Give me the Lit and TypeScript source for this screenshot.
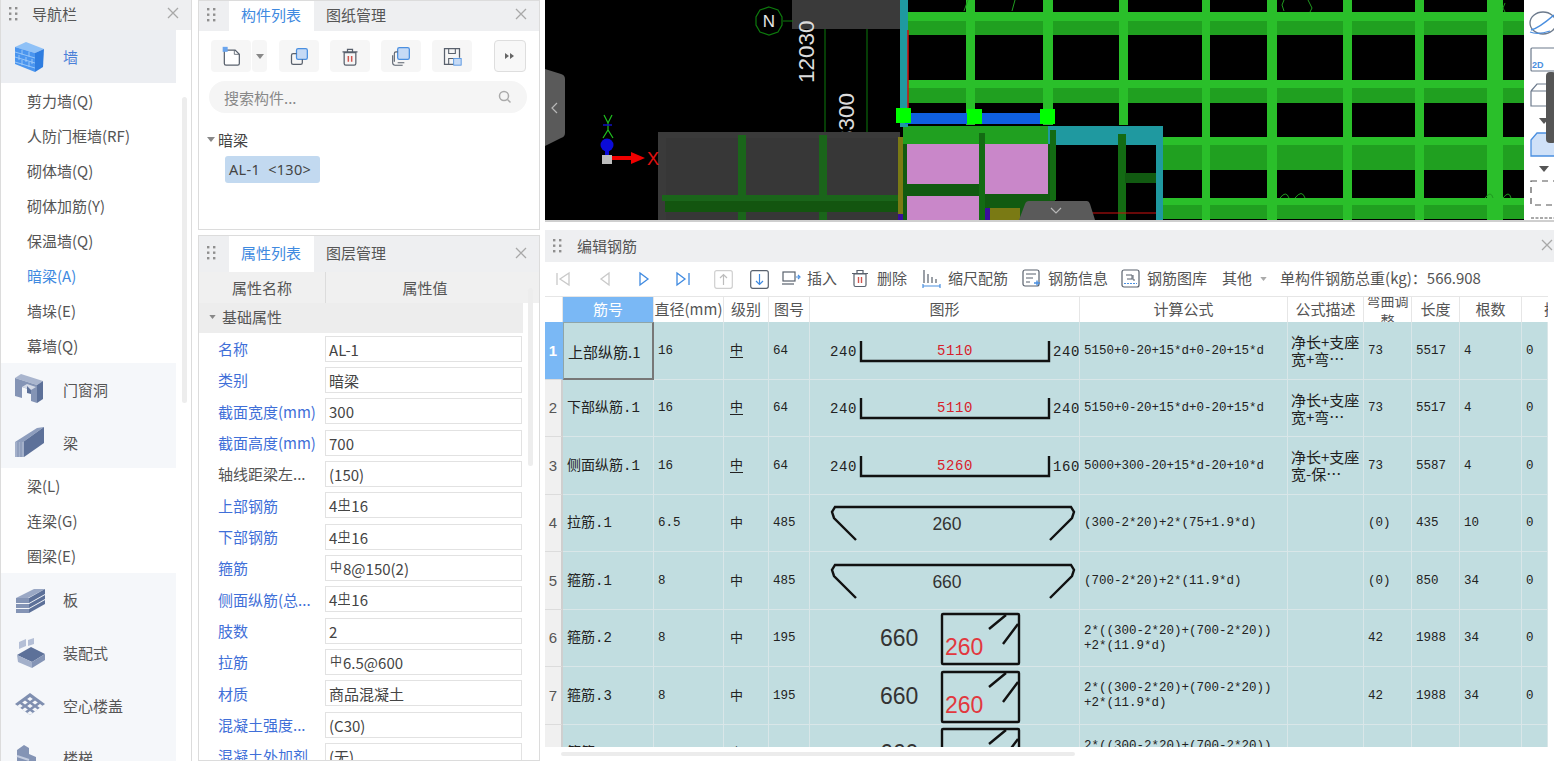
import { LitElement, html, css, svg } from "lit";
import { customElement } from "lit/decorators.js";

const grip = () => html`<svg class="grip" width="10" height="15" viewBox="0 0 10 15">
  ${[1, 6.5, 12].map((y) => [1, 7].map((x) => svg`<rect x=${x} y=${y} width="2.4" height="2.4" fill="#8f8f8f"/>`))}
</svg>`;

const closeX = () => html`<svg class="close" width="12" height="12" viewBox="0 0 12 12">
  <path d="M1 1l10 10M11 1L1 11" stroke="#a8a8a8" stroke-width="1.3" fill="none"/>
</svg>`;

const hollowCells = [0, 1, 2].flatMap((a) => [0, 1, 2].map((b) => [16 + (a - b) * 5, 8 + (a + b) * 3.5]));

// nav group icons, all in a 32x32 box
const navIcons: Record<string, unknown> = {
  wall: svg`<path d="M1 6l11-5 18 7-9 4z" fill="#8fc1f7"/><path d="M1 6l20 6v19L1 23z" fill="#4a95ef"/><path d="M21 12l9-4-1 18-8 5z" fill="#2f7de0"/>
    <path d="M1 11l20 6M1 16l20 6M1 21l20 6M8 8.5v5M15 10.5v5M5 14v5M12 16v5M18 18v5M8 19v5M15 21v5" stroke="#a9d0fa" stroke-width=".8" fill="none"/>`,
  door: svg`<path d="M1 5l6-4 22 7-6 4z" fill="#a9b5ce"/><path d="M1 5l22 7v18l-6-2V17l-9-3v11l-7-2z" fill="#8494b5"/><path d="M23 12l6-4v18l-6 4z" fill="#5d7199"/><path d="M8 14l9 3 5-3-9-3z" fill="#d3d9e6"/><path d="M13 13v7l4 1v-4z" fill="#5d7199"/>`,
  beam: svg`<path d="M1 16L23 2l7-1-21 15z" fill="#8d9dbd"/><path d="M9 16L30 1v16L10 31z" fill="#5d7199"/><path d="M1 16h9v15H1z" fill="#a3b0ca"/><path d="M4 16v15M7 16v15" stroke="#7f8fb0" fill="none"/>`,
  slab: svg`<path d="M2 14L20 5h11L14 14z" fill="#9aa8c5"/><path d="M2 14h13v5H2zM2 20h13v4H2zM2 25h13v4H2z" fill="#8494b5"/><path d="M15 14L31 5v5L15 19zM15 20l16-9v4L15 24zM15 25l16-9v4L15 29z" fill="#5d7199"/>`,
  prefab: svg`<path d="M5 6l7-3v7l-7 3zM14 4l6-2v6l-6 2z" fill="#b4bfd6"/><path d="M3 19l14-8 14 7-13 8z" fill="#5d7199"/><path d="M3 19l15 7v6L4 26z" fill="#a3b0ca"/><path d="M18 26l13-8v6l-13 8z" fill="#8494b5"/>`,
  hollow: svg`<path d="M16 4l15 11-15 11L1 15z" fill="#7f8fb0"/>
    ${hollowCells.map(([x, y]) => svg`<path d="M${x} ${y}l2.800 2-2.800 2-2.800-2z" fill="#f5f7fa"/>`)}`,
  stair: svg`<path d="M3 8l7-5 5 3v6l7 3v6l7 3v8H3z" fill="#8494b5"/><path d="M3 14l12 4M3 21l19 6" stroke="#c4cde0" stroke-width="2" fill="none"/>`,
};

const navData = [
  { icon: "wall", label: "墙", active: true, subs: ["剪力墙(Q)", "人防门框墙(RF)", "砌体墙(Q)", "砌体加筋(Y)", "保温墙(Q)", "暗梁(A)", "墙垛(E)", "幕墙(Q)"] },
  { icon: "door", label: "门窗洞", subs: [] },
  { icon: "beam", label: "梁", subs: ["梁(L)", "连梁(G)", "圈梁(E)"] },
  { icon: "slab", label: "板", subs: [] },
  { icon: "prefab", label: "装配式", subs: [] },
  { icon: "hollow", label: "空心楼盖", subs: [] },
  { icon: "stair", label: "楼梯", subs: [] },
];

// § = HRB400 bar symbol, ¤ = HPB300 bar symbol
const props: [string, string, boolean][] = [
  ["名称", "AL-1", true],
  ["类别", "暗梁", true],
  ["截面宽度(mm)", "300", true],
  ["截面高度(mm)", "700", true],
  ["轴线距梁左...", "(150)", false],
  ["上部钢筋", "4§16", true],
  ["下部钢筋", "4§16", true],
  ["箍筋", "¤8@150(2)", true],
  ["侧面纵筋(总...", "4§16", true],
  ["肢数", "2", true],
  ["拉筋", "¤6.5@600", true],
  ["材质", "商品混凝土", true],
  ["混凝土强度...", "(C30)", true],
  ["混凝土外加剂", "(无)", true],
];

const rebar = (s: string) =>
  [...s].map((c) =>
    c === "§" ? html`<span class="sym hrb">中</span>` : c === "¤" ? html`<span class="sym">中</span>` : c
  );

const strokeBlue = "#4a8fe0";
const strokeDark = "#59616d";

const toolIcons = {
  newDoc: svg`<path d="M4 5h13l5 5v11a2 2 0 0 1-2 2H6a2 2 0 0 1-2-2z" fill="#fff" stroke=${strokeDark} stroke-width="1.5"/><path d="M16 5v5h6" fill="none" stroke=${strokeDark}/><rect x="2" y="1" width="6" height="6" fill="#6aa5ee"/>`,
  copy: svg`<rect x="9" y="3" width="13" height="13" rx="2" fill="#c6daf5" stroke=${strokeBlue} stroke-width="1.5"/><path d="M9 9H5a2 2 0 0 0-2 2v9a2 2 0 0 0 2 2h9a2 2 0 0 0 2-2v-4" fill="none" stroke=${strokeDark} stroke-width="1.5"/>`,
  trash: svg`<path d="M5 8h14v13a2 2 0 0 1-2 2H7a2 2 0 0 1-2-2zM3 7h18M9 7V4h6v3" fill="none" stroke=${strokeDark} stroke-width="1.5"/><path d="M10 12v7M14 12v7" stroke="#d0564f" stroke-width="1.8"/>`,
  layers: svg`<rect x="8" y="2" width="14" height="14" rx="2" fill="#c6daf5" stroke=${strokeBlue} stroke-width="1.5"/><path d="M8 7H6a2 2 0 0 0-2 2v10M8 20h8M2 11v9a3 3 0 0 0 3 3h9" fill="none" stroke=${strokeDark} stroke-width="1.3"/>`,
  save: svg`<path d="M21 14V3H3v19h11" fill="none" stroke=${strokeDark} stroke-width="1.5"/><path d="M8 3v6h8V3M8 22v-7h6" fill="none" stroke=${strokeDark} stroke-width="1.3"/><rect x="14" y="15" width="9" height="8" fill="#c6daf5" stroke=${strokeBlue}/>`,
};

const ti = (k: keyof typeof toolIcons) => html`<svg width="20" height="20" viewBox="0 0 24 24">${toolIcons[k]}</svg>`;

const rowIcons = {
  insert: svg`<rect x="2" y="3" width="12" height="9" fill="none" stroke=${strokeDark} stroke-width="1.2"/><path d="M1 15h12" stroke=${strokeDark} stroke-width="1.2"/><path d="M15 8h3M17 6l2 2-2 2" stroke=${strokeBlue} stroke-width="1.2" fill="none"/>`,
  del: svg`<path d="M3 5h12v11a1.5 1.5 0 0 1-1.5 1.5h-9A1.5 1.5 0 0 1 3 16zM1 4.500h16M6 4V1.500h6V4" fill="none" stroke=${strokeDark} stroke-width="1.2"/><path d="M7.500 8v6M10.500 8v6" stroke="#d0564f" stroke-width="1.4"/>`,
  scale: svg`<path d="M2 1v13M6 5v9M10 8v6M14 10v4" stroke=${strokeDark} stroke-width="1.2"/><path d="M1 17h17M1 15v4M18 15v4" stroke=${strokeBlue} stroke-width="1.2" fill="none"/>`,
  info: svg`<rect x="1" y="1" width="16" height="16" rx="2" fill="none" stroke=${strokeDark} stroke-width="1.2"/><path d="M4 5h10M4 9h7M4 13h4" stroke=${strokeDark}/><path d="M12 14h6M15 11.500v5" stroke=${strokeBlue} stroke-width="1.4"/>`,
  lib: svg`<rect x="1" y="1" width="17" height="17" rx="2" fill="none" stroke=${strokeDark} stroke-width="1.2"/><path d="M5 6h6v4H6M12 6v5h2" fill="none" stroke=${strokeDark}/><path d="M3 14.500h13" stroke=${strokeBlue} stroke-dasharray="2 1"/>`,
};

const ri = (k: keyof typeof rowIcons) => html`<svg width="20" height="20" viewBox="0 0 20 20">${rowIcons[k]}</svg>`;

type Shape =
  | { t: "line"; l: string; m: string; r: string }
  | { t: "hook"; m: string }
  | { t: "box" };

// Shape pictures live on a cell-sized canvas of 270x57
const shape = (s: Shape) => {
  if (s.t === "line") {
    return html`<svg class="fig" width="270" height="57" viewBox="0 0 270 57">
      <text x="20" y="34" class="fnum">${s.l}</text>
      <path d="M51 19v20h188v-20" fill="none" stroke="#111" stroke-width="2.400"/>
      <text x="145" y="33" class="fnum red" text-anchor="middle">${s.m}</text>
      <text x="243" y="34" class="fnum">${s.r}</text>
    </svg>`;
  }
  if (s.t === "hook") {
    return html`<svg class="fig" width="270" height="57" viewBox="0 0 270 57">
      <path d="M46 46L24 24l-2-6 3-5h236l3 5-2 6-22 22" fill="none" stroke="#111" stroke-width="2.400"/>
      <text x="137" y="36" class="fsans" text-anchor="middle">${s.m}</text>
    </svg>`;
  }
  return html`<svg class="fig" width="270" height="57" viewBox="0 0 270 57">
    <text x="70" y="37" class="fbig">660</text>
    <rect x="132" y="5" width="77" height="50" rx="1" fill="none" stroke="#111" stroke-width="2.400"/>
    <path d="M179 20l17-14M193 35l15-20" stroke="#111" stroke-width="2.400" fill="none"/>
    <text x="135" y="46" class="fbig red2">260</text>
  </svg>`;
};

const longF = html`2*((300-2*20)+(700-2*20))<br />+2*(11.9*d)`;
const longD = (b: string) => html`<div>净长+支座<br />${b}</div>`;

const rows = [
  { name: "上部纵筋.1", d: "16", hrb: true, no: "64", s: { t: "line", l: "240", m: "5110", r: "240" }, f: "5150+0-20+15*d+0-20+15*d", desc: longD("宽+弯…"), adj: "73", len: "5517", n: "4" },
  { name: "下部纵筋.1", d: "16", hrb: true, no: "64", s: { t: "line", l: "240", m: "5110", r: "240" }, f: "5150+0-20+15*d+0-20+15*d", desc: longD("宽+弯…"), adj: "73", len: "5517", n: "4" },
  { name: "侧面纵筋.1", d: "16", hrb: true, no: "64", s: { t: "line", l: "240", m: "5260", r: "160" }, f: "5000+300-20+15*d-20+10*d", desc: longD("宽-保…"), adj: "73", len: "5587", n: "4" },
  { name: "拉筋.1", d: "6.5", hrb: false, no: "485", s: { t: "hook", m: "260" }, f: "(300-2*20)+2*(75+1.9*d)", desc: "", adj: "(0)", len: "435", n: "10" },
  { name: "箍筋.1", d: "8", hrb: false, no: "485", s: { t: "hook", m: "660" }, f: "(700-2*20)+2*(11.9*d)", desc: "", adj: "(0)", len: "850", n: "34" },
  { name: "箍筋.2", d: "8", hrb: false, no: "195", s: { t: "box" }, f: longF, desc: "", adj: "42", len: "1988", n: "34" },
  { name: "箍筋.3", d: "8", hrb: false, no: "195", s: { t: "box" }, f: longF, desc: "", adj: "42", len: "1988", n: "34" },
  { name: "箍筋.4", d: "8", hrb: false, no: "195", s: { t: "box" }, f: longF, desc: "", adj: "42", len: "1988", n: "34" },
] as { name: string; d: string; hrb: boolean; no: string; s: Shape; f: unknown; desc: unknown; adj: string; len: string; n: string }[];

const heads = ["直径(mm)", "级别", "图号", "图形", "计算公式", "公式描述"];

@customElement("model-canvas")
class ModelCanvas extends LitElement {
  static styles = css`
    :host { display: block; width: 979px; height: 220px; background: #000; overflow: hidden; }
    svg { display: block; }
    text { font-family: "Liberation Sans", sans-serif; }
  `;

  render() {
    const hBands = [[12, 9, 14], [80, 8, 15], [137, 8, 25], [198, 7, 14]];
    const verts = [[421, 9], [498, 10], [574, 9], [657, 8], [722, 10], [798, 9], [870, 9], [942, 16]];
    return html`<svg width="979" height="220" viewBox="0 0 979 220">
      <!-- rebar grid -->
      ${hBands.map(([y, a, b]) => svg`
        <rect x="363" y=${y} width="616" height=${a} fill="#2abf2a"/>
        <rect x="363" y=${y + a} width="616" height=${b} fill="#20a020"/>`)}
      ${verts.map(([x, w]) => svg`<rect x=${x} y="0" width=${w} height="220" fill="#2abf2a"/>`)}
      <path d="M423 0l-4 11M467 11l3-11M739 0l-2 5 2 6M763 0l4 8-2 4M960 3l-2 5 2 4" stroke="#1f9a1f" fill="none"/>
      <path d="M735 198q6-8 9 0M750 198q7-9 10 0M940 198q6-8 8 0M958 198q6-8 8 0" stroke="#1f9a1f" fill="none"/>

      <!-- black bay under the grid -->
      <rect x="363" y="125" width="255" height="95" fill="#000"/>
      <rect x="358" y="126" width="260" height="19" fill="#1f99a0"/>
      <rect x="611" y="127" width="7" height="93" fill="#1f99a0"/>
      <rect x="573" y="134" width="8" height="86" fill="#136b13"/>
      <rect x="580" y="173" width="31" height="10" fill="#115a11"/>
      <path d="M510 213h101" stroke="#d01010"/>

      <rect x="358" y="126" width="145" height="18" fill="#20a020"/>
      <rect x="358" y="144" width="152" height="76" fill="#115a11"/>
      <rect x="362" y="144" width="72" height="40" fill="#c987c9"/>
      <rect x="440" y="144" width="63" height="50" fill="#c987c9"/>
      <rect x="362" y="196" width="72" height="24" fill="#c987c9"/>
      <rect x="434" y="133" width="6" height="87" fill="#136b13"/>
      <rect x="505" y="130" width="6" height="70" fill="#136b13"/>
      <rect x="445" y="208" width="30" height="12" fill="#7a7a14"/>
      <rect x="440" y="208" width="5" height="12" fill="#3a0d9a"/>

      <!-- axis and beam -->
      <rect x="355" y="0" width="8" height="127" fill="#1f99a0"/>
      <path d="M363 30v80" stroke="#d01010" stroke-width="1.5"/>
      <rect x="360" y="113" width="140" height="11" fill="#0f60e0"/>
      <rect x="351" y="108" width="15" height="15" fill="#00ff00"/>
      <rect x="422" y="109" width="15" height="15" fill="#00ff00"/>
      <rect x="495" y="109" width="15" height="15" fill="#00ff00"/>

      <!-- dimensions -->
      <path d="M280 29v104M322 29v104" stroke="#0d7a0d" fill="none"/>
      <text transform="translate(309 143) rotate(-90)" fill="#dcdcdc" font-size="22.500">8300</text>

      <!-- grey blocks -->
      <rect x="247" y="0" width="108" height="29" fill="#3a3a3a"/>
      <rect x="113" y="132" width="242" height="88" fill="#3a3a3a"/>
      <rect x="121" y="138" width="232" height="82" fill="#373737"/>
      <rect x="193" y="135" width="8" height="85" fill="#1a651a"/>
      <rect x="274" y="135" width="8" height="85" fill="#1a651a"/>
      <rect x="117" y="195" width="239" height="6" fill="#1a651a"/>
      <rect x="120" y="201" width="236" height="11" fill="#13550f"/>
      <rect x="353" y="137" width="5" height="77" fill="#7a7a14"/>
      <rect x="353" y="214" width="5" height="6" fill="#3a0d9a"/>
      <text transform="translate(269 83) rotate(-90)" fill="#dcdcdc" font-size="22.500">12030</text>

      <!-- north marker -->
      <path d="M224 7l9 3 4 7v8l-4 7-9 3-9-3-4-7v-8l4-7z" fill="none" stroke="#0d7a0d" stroke-width="1.200"/>
      <path d="M238 21h10" stroke="#0d7a0d"/>
      <text x="224" y="27" fill="#e6e6e6" font-size="17" text-anchor="middle">N</text>

      <!-- UCS -->
      <path d="M59 115l4 8 4-8M63 123v8M58 138l5-8 5 8" stroke="#1fbf1f" fill="none" stroke-width="1.200"/>
      <path d="M58 125h9" stroke="#1010c0" stroke-width="1.500"/>
      <circle cx="62" cy="145" r="6.500" fill="#0b0bd8"/>
      <rect x="60" y="150" width="4" height="6" fill="#0b0bd8"/>
      <rect x="57" y="155" width="10" height="9" fill="#bdbdbd"/>
      <path d="M67 156h19v-4l14 6-14 6v-4H67z" fill="#f00000"/>
      <text x="102" y="165" fill="#e01010" font-size="18">X</text>

      <!-- collapse handles -->
      <path d="M0 69l16 5q4 1 4 5v54q0 4-4 5L0 146z" fill="#5a5a5a"/>
      <path d="M12 103l-5 5 5 5" stroke="#b8b8b8" stroke-width="1.200" fill="none"/>
      <path d="M474 220l6-16q1-3 4-3h58q2 0 3 3l5 16z" fill="#5a5a5a"/>
      <path d="M506 208l5 5 5-5" stroke="#b8b8b8" stroke-width="1.200" fill="none"/>
    </svg>`;
  }
}

@customElement("view-tools")
class ViewTools extends LitElement {
  static styles = css`
    :host { display: block; width: 30px; height: 220px; background: #fff; overflow: hidden; }
    svg { display: block; }
    text { font-family: "Liberation Sans", sans-serif; }
  `;

  render() {
    return html`<svg width="30" height="220" viewBox="0 0 30 220">
      <ellipse cx="19" cy="23" rx="13" ry="11" fill="none" stroke="#6c7a8c" stroke-width="1.300"/>
      <path d="M7 30q8-2 23-15" stroke="#4a8fe0" stroke-width="1.600" fill="none"/>
      <path d="M6 32q8 3 20-1" stroke="#4a8fe0" stroke-width="1.300" fill="none"/>
      <rect x="7" y="48" width="24" height="23" rx="1" fill="none" stroke="#6c7a8c" stroke-width="1.200"/>
      <text x="8" y="68" fill="#4a8fe0" font-size="9" font-weight="700">2D</text>
      <path d="M7 91l6-7h18M7 91h24M7 91v15h24" fill="none" stroke="#6c7a8c" stroke-width="1.200"/>
      <path d="M15 118h10l-5 6z" fill="#555"/>
      <path d="M7 140l6-7h18v23H7z" fill="#cfe1f8" stroke="#4a8fe0" stroke-width="1.300"/>
      <path d="M15 166h10l-5 6z" fill="#555"/>
      <rect x="7" y="181" width="26" height="24" fill="none" stroke="#555" stroke-width="1.200" stroke-dasharray="6 5"/>
      <path d="M7 218h26" stroke="#555" stroke-dasharray="3 1.500"/>
      <rect x="22" y="72" width="10" height="71" rx="4" fill="#555"/>
    </svg>`;
  }
}

@customElement("app-root")
class AppRoot extends LitElement {
  static styles = css`
    :host {
      display: block; width: 1554px; height: 761px; overflow: hidden; background: #fff;
      font-family: "Noto Sans CJK SC", "Liberation Sans", sans-serif; font-size: 15px; color: #444;
    }
    svg { display: block; flex: none; }
    .page { display: grid; grid-template-columns: 193px 342px 1009px; column-gap: 5px; height: 761px; }

    .head { --lift: 4px; display: flex; align-items: stretch; height: 30px; background: #eeeff1; font-size: 15px; flex: none; }
    .head .grip { align-self: center; margin: 0 13px var(--lift) 7px; }
    .head .close { align-self: center; margin: 0 12px var(--lift) auto; }
    .title { display: flex; align-items: center; color: #555; padding-bottom: var(--lift); }
    .tab { display: flex; align-items: center; padding: 0 12px var(--lift); color: #555; }
    .tab.on { background: #fff; color: #3f8ae0; padding-right: 13px; }

    /* navigator */
    .nav { position: relative; width: 192px; box-sizing: border-box; border: 1px solid #dcdcdc; border-width: 0 1px 0 1px; height: 761px; overflow: hidden; }
    .nav .head .grip { margin-right: 14px; }
    .group { width: 175px; height: 52.700px; display: flex; align-items: center; gap: 17px; padding-left: 13px; box-sizing: border-box; background: #f5f7fa; color: #555; }
    .group.on { background: #eceef2; color: #4a7fd8; height: 53px; }
    .group span { white-space: nowrap; }
    .sub { height: 35px; line-height: 35px; padding-left: 26px; width: 175px; box-sizing: border-box; color: #555; white-space: nowrap; }
    .sub.on { color: #3f8ae0; }
    .navbar { position: absolute; left: 181px; top: 97px; width: 5px; height: 306px; border-radius: 3px; background: #ededed; }

    /* middle column */
    .mid { display: flex; flex-direction: column; gap: 5px; height: 761px; }
    .panel { border: 1px solid #dcdcdc; box-sizing: border-box; }
    .comps { height: 230px; display: flex; flex-direction: column; }
    .tools { display: flex; align-items: center; gap: 11px; padding: 9px 0 0 12px; }
    .tbtn { width: 40px; height: 32px; border-radius: 4px; background: #f6f6f6; display: flex; align-items: center; justify-content: center; }
    .tbtn.caret { width: 15px; margin: 0 1px 0 -10px; }
    .tbtn.more { width: 32px; height: 32px; box-sizing: border-box; margin-left: 11px; border: 1px solid #dedede; background: #f8f8f8; }
    .search { margin: 9px 12px 0 10px; height: 32px; border-radius: 16px; background: #f5f5f5; display: flex; align-items: center; justify-content: space-between; padding: 0 15px; color: #888; }
    .tree { display: flex; align-items: center; gap: 3px; margin: 15px 0 0 8px; height: 22px; color: #444; }
    .chip { margin: 6px 0 0 26px; width: 95px; height: 27px; line-height: 27px; background: #c2d9f0; border-radius: 3px; padding-left: 4px; box-sizing: border-box; font-family: "Noto Sans", "Liberation Sans", sans-serif; font-size: 14.500px; letter-spacing: .3px; white-space: nowrap; color: #444; }

    .attrs { flex: 1; position: relative; overflow: hidden; }
    .attrs .head { height: 36px; --lift: 3px; }
    .cols { display: grid; grid-template-columns: 126px 199px; height: 31px; background: #f0f0f0; text-align: center; line-height: 31px; color: #555; }
    .cols div + div { border-left: 1px solid #dcdcdc; }
    .sect { width: 324px; height: 30px; display: flex; align-items: center; gap: 6px; padding: 0 0 3px 10px; box-sizing: border-box; background: #ededed; color: #555; }
    .row { display: grid; grid-template-columns: 126px 197px; height: 31.330px; align-items: center; }
    .row label { padding-left: 19px; white-space: nowrap; color: #555; }
    .row label.link { color: #3f6fd8; }
    .val { height: 26px; line-height: 25px; border: 1px solid #e2e2e2; box-sizing: border-box; padding-left: 3px; color: #444; white-space: nowrap; }
    .sym { font-size: 12px; position: relative; top: -3px; margin: 0 1px; display: inline-block; line-height: 12px; }
    .sym.hrb { border-bottom: 1px solid currentColor; height: 12px; }
    .attrbar { position: absolute; left: 329px; top: 52px; width: 5px; height: 178px; border-radius: 3px; background: #ededed; }

    /* right column */
    .right { display: flex; flex-direction: column; height: 761px; }
    .view { display: flex; height: 220px; flex: none; border-bottom: 2px solid #cfcfcf; }
    .rebar { margin-top: 8px; flex: 1; display: flex; flex-direction: column; min-height: 0; position: relative; }
    .rebar .head { height: 32px; --lift: 2px; }
    .rebar .head .grip { margin-right: 15px; }
    .rebar .head .close { margin-right: 1px; }
    .bar { height: 34px; display: flex; align-items: center; flex: none; color: #555; white-space: nowrap; }
    .bar span { padding-bottom: 3px; }
    .bar .act { display: flex; align-items: center; gap: 6px; }
    .tbl {
      display: grid; flex: none; height: 451px; overflow: hidden;
      grid-template-columns: 18px 91px 70px 45px 41px 270px 208px 76px 48px 48px 62px 26px;
      grid-template-rows: 26px; grid-auto-rows: 57.500px;
    }
    .th { display: flex; align-items: center; justify-content: center; padding-bottom: 2px; background: #fff; border-right: 1px solid #e6e6e6; border-top: 1px solid #e6e6e6; overflow: hidden; white-space: nowrap; color: #555; box-sizing: border-box; }
    .th.sel { background: #7ab8f5; color: #fff; }
    .th.wrap { white-space: normal; line-height: 20px; text-align: center; font-size: 14px; padding: 0; }
    .th.cut { justify-content: flex-start; padding-left: 22px; border-right: 0; }
    .rn { display: flex; align-items: center; justify-content: center; background: #f0f0f0; border-bottom: 1px solid #dcdcdc; border-right: 2px solid #cfcfcf; box-sizing: border-box; font: 15px "Liberation Sans", sans-serif; color: #555; }
    .rn.sel { background: #7ab8f5; color: #fff; font-weight: 700; border-right-color: #7ab8f5; }
    .td {
      display: flex; align-items: center; padding: 2px 0 0 4px; box-sizing: border-box; overflow: hidden; white-space: nowrap;
      background: #c1dde0; border-right: 1px solid #d9e6e8; border-bottom: 1px solid #d9e6e8;
      font: 12.500px/15px "Liberation Mono", "Noto Sans CJK SC", monospace; color: #222;
    }
    .td.name { font-size: 14px; padding-left: 4px; }
    .td.cur { font-family: "Noto Sans CJK SC", sans-serif; font-size: 15px; border-right: 2px solid #777; border-bottom: 2px solid #777; border-left: 1px solid #8fa5a8; border-top: 1px solid #8fa5a8; }
    .td.desc { font: 15px/17px "Noto Sans CJK SC", sans-serif; padding: 0 0 0 3px; }
    .td.grade { padding-left: 6px; font-size: 13px; }
    .td.fig { padding: 0; }
    .td .hrb { display: inline-block; border-bottom: 1px solid #222; height: 12px; line-height: 12px; }
    .fnum { font: 14px "Liberation Mono", monospace; letter-spacing: .6px; fill: #222; }
    .fnum.red { fill: #d8202a; }
    .fsans { font: 17.500px "Liberation Sans", sans-serif; fill: #333; }
    .fbig { font: 23px "Liberation Sans", sans-serif; fill: #333; }
    .fbig.red2 { fill: #e2383e; }
    .hscroll { flex: none; height: 14px; display: flex; align-items: center; padding-left: 16px; }
    .hscroll div { width: 514px; height: 4px; border-radius: 2px; background: #ececec; }
  `;

  renderNav() {
    return html`<div class="nav">
      <div class="head">${grip()}<div class="title">导航栏</div>${closeX()}</div>
      ${navData.map((g) => html`
        <div class="group ${g.active ? "on" : ""}">
          <svg width="32" height="32" viewBox="0 0 32 32">${navIcons[g.icon]}</svg><span>${g.label}</span>
        </div>
        ${g.subs.map((s) => html`<div class="sub ${s === "暗梁(A)" ? "on" : ""}">${s}</div>`)}`)}
      <div class="navbar"></div>
    </div>`;
  }

  renderMid() {
    return html`<div class="mid">
      <div class="panel comps">
        <div class="head">${grip()}<div class="tab on">构件列表</div><div class="tab">图纸管理</div>${closeX()}</div>
        <div class="tools">
          <div class="tbtn">${ti("newDoc")}</div>
          <div class="tbtn caret"><svg width="8" height="5" viewBox="0 0 8 5"><path d="M0 0h8L4 5z" fill="#888"/></svg></div>
          <div class="tbtn">${ti("copy")}</div>
          <div class="tbtn">${ti("trash")}</div>
          <div class="tbtn">${ti("layers")}</div>
          <div class="tbtn">${ti("save")}</div>
          <div class="tbtn more"><svg width="10" height="8" viewBox="0 0 10 8"><path d="M0 1l4 3-4 3zM5 1l4 3-4 3z" fill="#666"/></svg></div>
        </div>
        <div class="search">
          <span>搜索构件...</span>
          <svg width="14" height="14" viewBox="0 0 14 14"><circle cx="6" cy="6" r="4.500" fill="none" stroke="#aaa" stroke-width="1.500"/><path d="M9.500 9.500l3 3" stroke="#aaa" stroke-width="1.500"/></svg>
        </div>
        <div class="tree"><svg width="8" height="5" viewBox="0 0 8 5"><path d="M0 0h8L4 5z" fill="#888"/></svg>暗梁</div>
        <div class="chip">AL-1&nbsp;&nbsp;&lt;130&gt;</div>
      </div>
      <div class="panel attrs">
        <div class="head">${grip()}<div class="tab on">属性列表</div><div class="tab">图层管理</div>${closeX()}</div>
        <div class="cols"><div>属性名称</div><div>属性值</div></div>
        <div class="sect"><svg width="7" height="4" viewBox="0 0 8 5"><path d="M0 0h8L4 5z" fill="#888"/></svg>基础属性</div>
        ${props.map(([k, v, link]) => html`<div class="row">
          <label class=${link ? "link" : ""}>${k}</label><div class="val">${rebar(v)}</div>
        </div>`)}
        <div class="attrbar"></div>
      </div>
    </div>`;
  }

  renderBar() {
    const nav = (d: string, color: string, x: number) =>
      html`<svg style="margin-left:${x}px" width="16" height="18" viewBox="0 0 16 18"><path d=${d} fill="none" stroke=${color} stroke-width="1.300"/></svg>`;
    const box = (d: string, stroke: string, arrow: string, x: number) =>
      html`<svg style="margin-left:${x}px" width="19" height="19" viewBox="0 0 19 19"><rect x=".7" y=".7" width="17.600" height="17.600" rx="2" fill="none" stroke=${stroke} stroke-width="1.200"/><path d=${d} fill="none" stroke=${arrow} stroke-width="1.200"/></svg>`;
    return html`<div class="bar">
      ${nav("M2 3v12M14 3L5 9l9 6z", "#c9c9c9", 10)}
      ${nav("M12 3L4 9l8 6z", "#c9c9c9", 26)}
      ${nav("M4 3l8 6-8 6z", "#3f8ae0", 23)}
      ${nav("M2 3l8 6-8 6zM14 3v12", "#3f8ae0", 23)}
      ${box("M9.500 15V5M6 8l3.500-3.500L13 8", "#cfcfcf", "#bdbdbd", 23)}
      ${box("M9.500 4v10M6 11l3.500 3.500L13 11", strokeDark, "#3f8ae0", 17)}
      <div class="act" style="margin-left:12px">${ri("insert")}<span>插入</span></div>
      <div class="act" style="margin-left:14px">${ri("del")}<span>删除</span></div>
      <div class="act" style="margin-left:15px">${ri("scale")}<span>缩尺配筋</span></div>
      <div class="act" style="margin-left:14px">${ri("info")}<span>钢筋信息</span></div>
      <div class="act" style="margin-left:13px">${ri("lib")}<span>钢筋图库</span></div>
      <span style="margin-left:15px">其他</span>
      <svg style="margin-left:8px" width="7" height="4" viewBox="0 0 8 5"><path d="M0 0h8L4 5z" fill="#aaa"/></svg>
      <span style="margin-left:13px">单构件钢筋总重(kg)：566.908</span>
    </div>`;
  }

  renderTable() {
    return html`<div class="tbl">
      <div class="th"></div>
      <div class="th sel">筋号</div>
      ${heads.map((h) => html`<div class="th">${h}</div>`)}
      <div class="th wrap">弯曲调<br />整</div>
      <div class="th">长度</div>
      <div class="th">根数</div>
      <div class="th cut">搭接</div>
      ${rows.map((r, i) => html`
        <div class="rn ${i === 0 ? "sel" : ""}">${i + 1}</div>
        <div class="td name ${i === 0 ? "cur" : ""}">${r.name}</div>
        <div class="td">${r.d}</div>
        <div class="td grade">${r.hrb ? html`<span class="hrb">中</span>` : "中"}</div>
        <div class="td">${r.no}</div>
        <div class="td fig">${shape(r.s)}</div>
        <div class="td">${r.f}</div>
        <div class="td desc">${r.desc}</div>
        <div class="td">${r.adj}</div>
        <div class="td">${r.len}</div>
        <div class="td">${r.n}</div>
        <div class="td">0</div>`)}
    </div>`;
  }

  render() {
    return html`<div class="page">
      ${this.renderNav()}
      ${this.renderMid()}
      <div class="right">
        <div class="view"><model-canvas></model-canvas><view-tools></view-tools></div>
        <div class="rebar">
          <div class="head">${grip()}<div class="title">编辑钢筋</div>${closeX()}</div>
          ${this.renderBar()}
          ${this.renderTable()}
          <div class="hscroll"><div></div></div>
        </div>
      </div>
    </div>`;
  }
}

export { AppRoot, ModelCanvas, ViewTools };
